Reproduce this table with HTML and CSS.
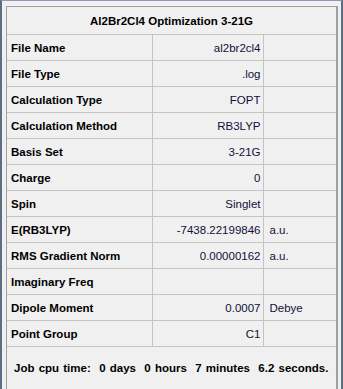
FILE: index.html
```html
<!DOCTYPE html>
<html lang="en">
<head>
  <meta charset="UTF-8">
  <title>Al2Br2Cl4 Optimization 3-21G</title>
  <link rel="stylesheet" href="styles.css">
</head>
<body>
  <div class="window">
    <div class="panel">
      <table class="summary">
        <colgroup>
          <col class="col-label">
          <col class="col-value">
          <col class="col-unit">
        </colgroup>
        <thead>
          <tr>
            <th colspan="3">Al2Br2Cl4 Optimization 3-21G</th>
          </tr>
        </thead>
        <tbody>
          <tr><td class="label">File Name</td><td class="value">al2br2cl4</td><td class="unit"></td></tr>
          <tr><td class="label">File Type</td><td class="value">.log</td><td class="unit"></td></tr>
          <tr><td class="label">Calculation Type</td><td class="value">FOPT</td><td class="unit"></td></tr>
          <tr><td class="label">Calculation Method</td><td class="value">RB3LYP</td><td class="unit"></td></tr>
          <tr><td class="label">Basis Set</td><td class="value">3-21G</td><td class="unit"></td></tr>
          <tr><td class="label">Charge</td><td class="value">0</td><td class="unit"></td></tr>
          <tr><td class="label">Spin</td><td class="value">Singlet</td><td class="unit"></td></tr>
          <tr><td class="label">E(RB3LYP)</td><td class="value">-7438.22199846</td><td class="unit">a.u.</td></tr>
          <tr><td class="label">RMS Gradient Norm</td><td class="value">0.00000162</td><td class="unit">a.u.</td></tr>
          <tr><td class="label">Imaginary Freq</td><td class="value"></td><td class="unit"></td></tr>
          <tr><td class="label">Dipole Moment</td><td class="value">0.0007</td><td class="unit">Debye</td></tr>
          <tr><td class="label">Point Group</td><td class="value">C1</td><td class="unit"></td></tr>
        </tbody>
      </table>
      <div class="footer">Job cpu time:  0 days  0 hours  7 minutes  6.2 seconds.</div>
    </div>
  </div>
</body>
</html>
```

FILE: styles.css
```css
html, body {
  margin: 0;
  padding: 0;
  background-color: #f0f0f0;
}

body {
  font-family: 'Liberation Sans', Arial, sans-serif;
  font-size: 11.5px;
  color: #000000;
}

.window {
  width: 343px;
  height: 389px;
  box-sizing: border-box;
  border-top: 1px solid #8c9bb0;
  border-left: 2px solid #5d6d84;
  border-right: 2px solid #5d6d84;
  padding: 5px 5px 0 4px;
  background-color: #f0f0f0;
}

.panel {
  width: 332px;
  height: 383px;
  box-sizing: border-box;
  border-left: 1px solid #a0a0a0;
  border-top: 1px solid #a0a0a0;
  border-right: 2px solid #a0a0a0;
  display: flex;
  flex-direction: column;
}

.summary {
  border-collapse: collapse;
  table-layout: fixed;
  width: 329px;
}

.col-label { width: 145px; }
.col-value { width: 111px; }
.col-unit { width: 73px; }

.summary th {
  height: 27px;
  padding: 0;
  font-weight: bold;
  text-align: center;
  border-bottom: 1px solid #c4c4c4;
}

.summary td {
  height: 25px;
  padding: 0;
  border-bottom: 1px solid #c4c4c4;
  border-right: 1px solid #c4c4c4;
  white-space: nowrap;
}

.summary td.unit {
  border-right: none;
  padding-left: 6px;
  color: #10103a;
}

.label {
  font-weight: bold;
  padding-left: 4px !important;
}

.value {
  text-align: right;
  padding-right: 2px !important;
  color: #10103a;
}

.footer {
  height: 39px;
  line-height: 42px;
  padding-left: 7px;
  font-weight: bold;
  white-space: pre;
  word-spacing: 1px;
}
```
